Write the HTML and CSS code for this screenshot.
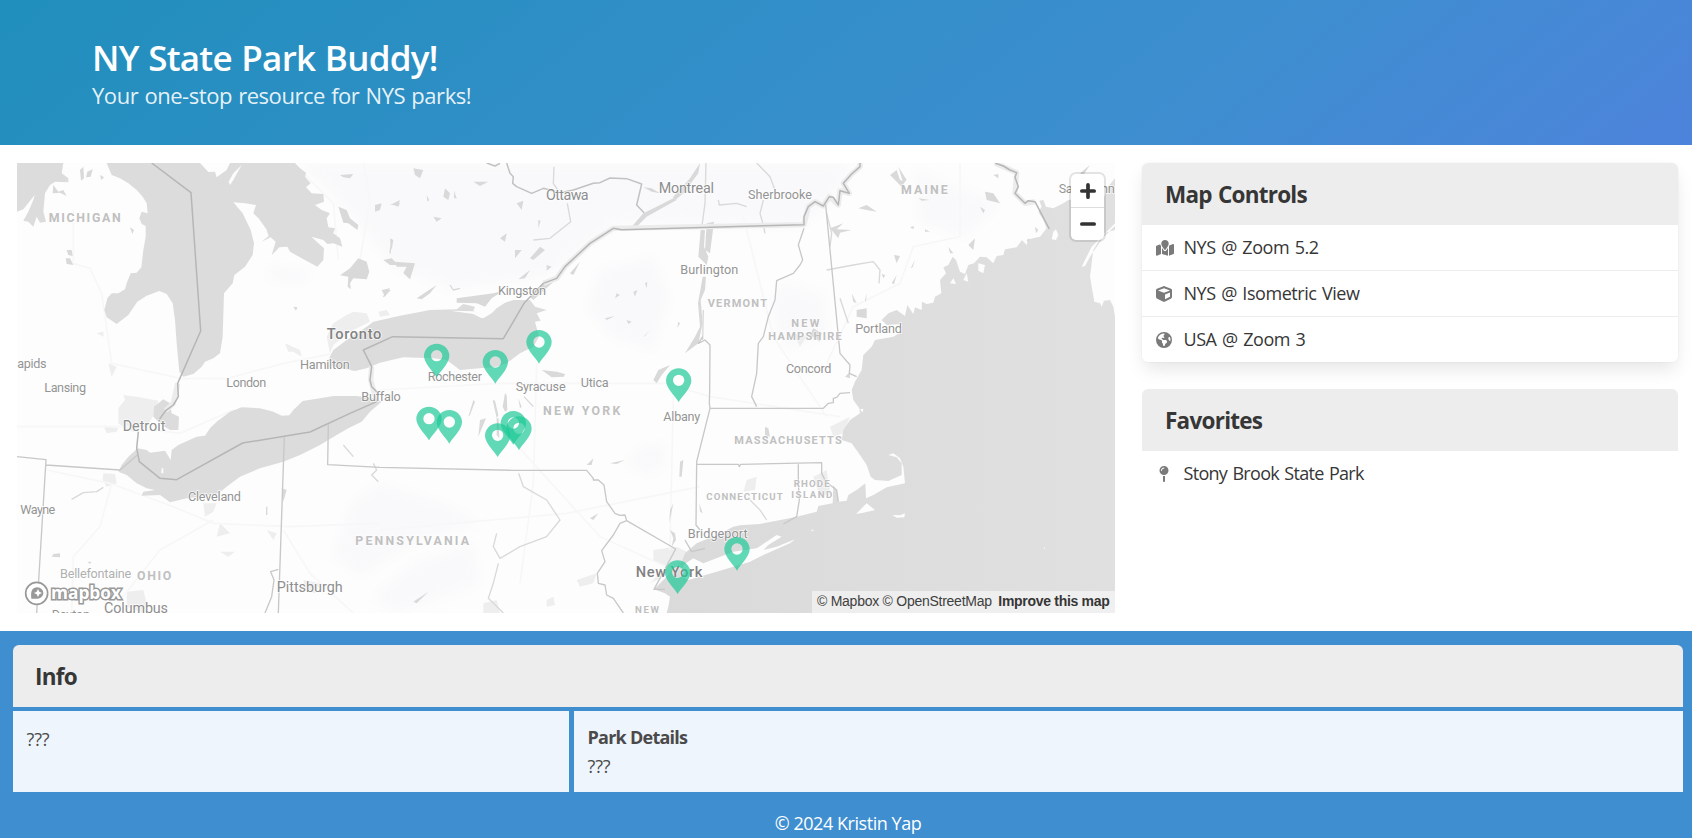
FILE: index.html
```html
<!DOCTYPE html>
<html lang="en">
<head>
<meta charset="utf-8">
<title>NY State Park Buddy</title>
<link rel="stylesheet" href="styles.css">
</head>
<body>
<header class="hero">
  <h1 class="title"><span>NY State Park Buddy!</span></h1>
  <p class="subtitle"><span>Your one-stop resource for NYS parks!</span></p>
</header>
<main class="columns">
  <section class="map">
    <svg class="map-canvas" viewBox="51 39 3294 1350" preserveAspectRatio="none">
      <defs>
        <linearGradient id="sea" x1="0" x2="1"><stop offset="0" stop-color="#dadada"/><stop offset="1" stop-color="#e0e0e0"/></linearGradient>
        <path id="pin" fill-rule="evenodd" d="M0 62C-10 44-38 20-38-2A38 37 0 0 1 38-2C38 20 10 44 0 62ZM0-20A17 17 0 1 0 0 14A17 17 0 1 0 0-20Z"/>
        <filter id="soft"><feGaussianBlur stdDeviation="16"/></filter>
      </defs>
      <rect x="51" y="39" width="3294" height="1350" fill="#fdfdfd"/>
      <g fill="#f9f9fb" filter="url(#soft)">
        <path d="M900 39H2560L2500 150 2400 230 1850 220 1640 380 1350 420 1180 350 1060 200Z"/>
        <path d="M1800 360L1960 320 2010 440 1960 600 1830 560 1760 470Z"/>
        <path d="M1140 1000L1340 1060 1440 1120 1240 1180 1080 1280 1000 1220 1050 1060ZM1920 890L1990 880 2000 940 1950 970 1870 950Z"/>
        <path d="M2340 400L2470 430 2480 560 2360 600 2310 480ZM800 350L940 360 900 400 810 390ZM1240 1240L1420 1180 1440 1300 1280 1360 1180 1389 1120 1340Z"/>
        <path d="M2740 60L3000 160 2900 260 2760 220Z"/>
      </g>
      <!-- towns -->
      <g fill="#eeeeef">
        <path d="M355 775L375 750 370 735 410 740 450 748 475 752 470 775 458 800 440 830 400 845 380 840 355 820ZM310 825L330 830 355 835 350 845 320 850ZM310 970L345 972 350 1000 320 1010 308 990Z"/>
        <path d="M1000 520L1040 495 1060 485 1100 490 1110 515 1050 545 1000 585 990 610 980 560ZM1135 485L1160 480 1170 495 1140 500ZM855 580L900 600 905 620 880 605 865 605Z"/>
        <path d="M610 1060L650 1060 640 1085 615 1100ZM660 1120L690 1150 650 1160ZM660 1205L705 1205 685 1220ZM380 1325L430 1320 440 1360 430 1389 380 1370ZM800 1140L830 1150 820 1170ZM910 1290L960 1300 945 1330 915 1320ZM290 550L310 545 310 560ZM325 640L350 650 335 680Z"/>
        <path d="M1960 1200L2030 1190 2070 1210 2040 1250 1990 1280 1950 1300 2000 1250 1960 1230ZM1730 1290L1790 1270 1780 1300 1740 1310ZM2240 990L2270 980 2265 1020 2230 1025ZM2490 830L2550 800 2530 850 2500 860ZM2440 980L2480 960 2490 1030 2460 1040ZM1640 1350L1660 1340 1665 1365 1640 1370ZM1450 1360L1490 1350 1500 1389 1450 1389ZM2380 550L2420 560 2400 590Z"/>
      </g>
      <!-- roads -->
      <g fill="none" stroke="#f7f7f8" stroke-width="5">
        <path d="M220 180V340L270 355 305 430 335 640 540 685 680 686 850 640 1000 610M51 830L200 830 380 830 540 850 700 780M140 960L330 1000 520 1070 640 1120 860 1130 1140 1120M335 1000L300 1130 220 1220 215 1389M640 1110L480 1200 330 1389M850 1140L930 1270 1060 1389M900 60L1000 160 1015 330M1090 39L1110 150 1080 330M1140 720L1500 700 2000 700 2130 740 2520 800M1610 640L1600 1000 1560 1300M2020 740L2010 1200M1500 830L1800 1160 2020 1260M1140 1140L1700 1090 2100 1010M2230 200L2320 560 2480 800M2480 640L2560 470 2700 400 2740 290 2880 260 2880 39"/>
      </g>
      <!-- great lakes -->
      <g fill="#dcdcdc">
        <path d="M51 39H190L185 70 205 85 205 97 165 95 150 105 135 130 130 185 138 215 120 218 110 200 100 230 85 215 70 212 85 185 100 150 104 135 70 178 51 185Z"/>
        <path d="M320 39L335 75 360 85 385 100 410 120 428 140 440 160 443 190 425 185 418 205 425 222 437 228 437 260 430 300 424 352 410 368 392 370 380 400 375 418 355 430 335 430 322 445 313 480 320 502 350 522 385 495 412 455 440 437 478 423 500 432 518 460 525 510 530 580 538 665 550 680 580 672 605 650 615 635 640 625 660 610 668 560 672 430 698 400 703 375 735 350 758 315 762 280 752 240 728 190 700 157 735 160 768 165 760 190 775 205 790 225 800 240 806 258 785 275 812 262 827 275 815 316 838 292 862 290 870 305 905 325 952 350 970 330 972 295 955 280 934 260 970 270 982 282 1000 280 1027 290 1020 265 1000 250 1005 235 985 232 980 205 990 190 965 180 945 165 972 155 970 132 935 130 918 112 932 100 915 80 918 68 900 55 885 39Z"/>
        <path d="M413 895L440 900 450 908 495 902 512 930 515 900 535 885 590 860 615 857 630 835 650 815 690 785 725 772 780 775 820 785 845 797 868 796 880 780 908 753 960 745 1000 738 1070 738 1120 745 1145 755 1110 785 1085 815 1045 835 1010 855 960 885 900 915 850 935 780 955 720 980 680 1010 655 1030 600 1040 560 1045 510 1057 480 1035 425 1037 430 1025 465 1020 440 1015 410 1000 380 975 355 965 365 945 385 920Z"/>
        <path d="M490 748L510 760 515 790 537 800 535 840 510 840 485 825 460 800 462 770Z"/>
        <path d="M985 630L1000 600 1040 570 1100 530 1120 515 1200 497 1240 490 1290 480 1370 478 1390 462 1425 470 1420 482 1450 505 1475 490 1490 475 1515 458 1540 450 1590 450 1605 470 1640 480 1610 490 1622 512 1605 515 1617 560 1600 590 1560 610 1520 640 1490 650 1380 660 1340 630 1300 625 1210 622 1140 638 1100 655 1065 663 1000 650Z"/>
      </g>
      <path fill="url(#sea)" d="M3345 85L3320 115 3313 140 3205 150 3190 160 3160 175 3138 170 3130 150 3118 152 3125 170 3115 185 3130 210 3140 235 3120 260 3085 268 3080 285 3066 270 3050 292 3015 298 3010 315 2990 318 2980 340 2960 322 2940 320 2922 340 2905 345 2895 372 2880 365 2868 330 2858 320 2845 345 2830 352 2838 370 2820 390 2824 430 2805 440 2800 458 2780 462 2766 455 2765 480 2745 472 2740 492 2722 465 2715 498 2690 480 2665 490 2645 510 2660 525 2705 522 2705 545 2680 560 2625 570 2615 590 2590 615 2585 660 2565 695 2555 720 2560 750 2578 775 2580 790 2550 810 2530 840 2525 870 2555 880 2580 915 2600 945 2612 980 2625 990 2665 993 2705 975 2705 940 2690 922 2665 915 2680 910 2700 925 2710 950 2715 1000 2660 1012 2620 1035 2598 1045 2596 1000 2570 1020 2545 1035 2540 1052 2515 1055 2510 1020 2500 1005 2498 1060 2455 1068 2450 1085 2390 1100 2330 1112 2280 1122 2220 1126 2200 1130 2150 1155 2090 1180 2055 1210 2045 1235 2015 1262 1990 1290 1962 1318 1995 1330 2010 1340 2005 1370 2000 1389H3345Z"/>
      <g fill="#fdfdfd">
        <path d="M3345 240L3310 250 3280 300 3270 380 3283 455 3300 460 3305 470 3312 452 3330 450 3340 470 3345 500ZM3245 350L3275 290 3320 245 3345 220V228L3310 262 3270 320 3255 348ZM3155 268L3160 245 3168 238 3175 255 3168 270Z"/>
        <path d="M2040 1275L2050 1245 2080 1225 2110 1240 2200 1205 2270 1195 2330 1155 2345 1160 2305 1185 2290 1200 2330 1190 2385 1168 2370 1180 2290 1215 2250 1235 2160 1262 2065 1290Z"/>
        <path d="M2568 1092L2600 1060 2625 1080 2590 1088ZM2677 1095L2700 1096 2715 1090 2713 1102 2690 1103ZM2435 1138L2442 1142 2434 1143ZM2580 778L2590 776 2588 788ZM485 955L490 955 490 970 484 970ZM600 39H690L680 60 650 82 645 65 625 66ZM725 45L700 90 690 105 686 95 700 70ZM3132 1193H3135V1196H3132Z"/>
        <path d="M1350 482L1420 484 1450 500 1445 505 1420 492ZM2850 400L2860 385 2868 402ZM2890 390L2900 370 2905 395ZM2935 340L2955 345 2950 370 2935 362ZM750 190L775 205 800 240 780 250 755 215Z"/>
      </g>
      <!-- inland lakes and rivers -->
      <g fill="#d9d9d9">
        <path d="M240 60L250 50 252 85 243 92ZM262 65L278 58 272 80 258 82ZM300 75L312 82 304 90ZM200 300L215 300 218 318 205 315ZM197 325L210 325 220 345 200 342ZM390 232L402 240 397 252ZM160 105L175 125 190 120 200 138 180 128 158 130ZM1020 376L1050 355 1075 325 1100 335 1108 365 1100 388 1060 385 1050 400 1053 418 1043 410 1045 380ZM1015 170L1040 180 1050 205 1075 225 1072 240 1045 220 1030 218ZM1020 75L1060 72 1050 85 1030 82ZM1125 165L1145 160 1140 180 1125 185ZM1170 165L1200 150 1195 165ZM1170 265L1180 270 1175 300ZM1150 330L1175 325 1195 345 1170 345ZM1145 420L1170 415 1155 440ZM880 470L892 472 888 482Z"/>
        <path d="M1240 55L1270 60 1260 85 1245 75ZM1335 115L1350 130 1345 150 1330 140ZM1362 122L1370 145 1362 145ZM1280 135L1288 150 1282 155ZM1180 165L1200 158 1195 170ZM1420 95L1465 95 1440 108ZM1300 200L1325 205 1310 215ZM1275 145L1285 140ZM1615 210L1622 212 1615 235ZM1550 160L1570 152 1565 180ZM1500 265L1520 250 1515 275ZM1545 300L1565 300 1545 325ZM1590 325L1620 290 1635 300 1600 330ZM1555 388L1590 360 1575 385ZM1250 445L1310 405 1290 430 1265 448ZM1185 335L1245 340 1230 388 1210 370 1220 350 1190 350ZM1640 345L1655 350 1640 362ZM1710 370L1740 335 1720 375Z"/>
        <path d="M1370 445L1480 430 1510 422 1475 445 1455 470 1430 460 1370 458ZM1590 440L1630 400 1680 380 1650 405 1600 450ZM1895 230L1930 190 1970 170 2020 145 2030 150 1980 178 1940 200 1910 230ZM2020 140L2070 85 2100 39 2095 70 2050 130 2020 155ZM1930 112L1955 115 1980 130 1955 125ZM2102 240L2115 240 2112 290 2125 320 2120 345 2105 330 2095 320ZM2120 220L2142 215 2130 310 2115 300ZM2108 380L2118 380 2115 420 2102 450 2108 520 2095 580 2055 610 2085 560 2100 530 2094 460ZM1850 430L1860 435 1845 445ZM1900 425L1912 420 1905 440ZM1935 400L1942 395 1940 415ZM1815 505L1845 498 1820 510ZM1880 510L1895 515 1885 522ZM1930 560L1950 540 1935 558ZM2035 515L2040 520 2032 535ZM1625 660L1670 665 1695 672 1692 680 1655 682ZM1960 690L1975 660 2010 645 1985 675 1970 700ZM1478 750L1485 752 1495 795 1490 805ZM1515 730L1520 735 1522 780 1515 785 1508 770ZM1420 750L1425 755 1410 795 1405 800ZM1440 810L1458 805 1435 860ZM1555 745L1565 770 1560 775ZM1490 805L1496 805 1498 865 1490 855Z"/>
        <path d="M2670 75L2690 60 2700 90 2715 95 2705 110ZM2695 50L2720 90 2710 100ZM2575 175L2600 165 2630 185 2600 180ZM2490 235L2530 220 2510 238 2555 240 2520 248 2515 265ZM2755 145L2790 150 2765 152ZM2955 125L2980 130 3000 160 2960 150ZM2980 75L2995 72 2995 85ZM2940 170L2955 180 2950 190ZM2730 232L2742 228 2740 238ZM2775 238L2790 245 2775 245ZM2905 285L2925 265 2920 300ZM2845 290L2860 310 2850 310ZM2682 315L2700 318 2690 340ZM2732 355L2745 330 2738 352ZM2645 372L2656 375 2650 385ZM2675 400L2690 375 2682 402ZM2555 430L2570 460 2560 455ZM2595 450L2600 430 2598 455ZM2570 480L2600 475 2600 505 2570 500ZM2440 535L2465 550 2460 575 2430 555ZM2535 680L2550 665 2550 685ZM2040 935L2050 930 2045 980 2038 980ZM1760 945L1780 925 1775 945ZM1830 940L1875 930 1850 942ZM1770 1105L1795 1090 1780 1110ZM2010 1080L2020 1060 2008 1120ZM2010 1140L2025 1150 2028 1170 2015 1190 2020 1165ZM2098 1060L2108 1090 2100 1085ZM2295 830L2305 835 2310 860 2295 855ZM1240 1355L1285 1325 1270 1340 1250 1360ZM160 1212L180 1210 180 1222 155 1220ZM262 1235L275 1235 270 1242ZM845 1015L860 1020 850 1055ZM3105 230L3115 240 3108 250ZM3080 270L3087 265 3085 280ZM3240 70L3270 45 3250 75Z"/>
      </g>
      <g fill="none" stroke="#d9d9d9" stroke-width="4" stroke-linejoin="round">
        <path d="M2118 39L2115 160 2105 235M1702 160L1712 215 1650 265 1600 270M1662 50L1660 100 1680 130M2155 150L2158 165 2210 160 2240 170M2290 150L2280 190 2290 225 2295 250M2270 39L2310 80 2325 120M2110 480L2108 570M1556 970L1570 1010 1640 1050 1680 1110 1640 1160 1560 1190 1500 1225 1480 1190 1490 1150M1495 1240L1480 1300 1465 1345 1510 1389M2480 360L2560 345 2620 335 2640 360 2637 400M2520 445L2545 520M2250 1050L2280 1080 2300 1110M2480 190L2495 250 2490 290M1572 740L1600 770M1120 940L1130 960 1115 975 1135 995M215 1048L250 1028 290 1025 310 1012M800 1070V1095M1030 885L1060 920M1170 420L1150 440M1350 405L1360 420 1380 415M1175 270L1170 310"/>
      </g>
      <!-- glow along the national border -->
      <g fill="none" stroke="#ececed" stroke-width="16" stroke-linejoin="round">
        <path d="M533 700L520 760 497 782M1130 755L1112 690 1115 650M1630 400L1670 385 1695 350 1770 280 1840 235 2412 224 2425 170 2445 155 2470 168 2488 140 2515 165 2520 122 2548 130 2530 100 2555 72 2580 50V39M2985 39L3050 68 3045 130 3075 160 3105 155"/>
      </g>
      <g fill="none" stroke="#b6b6b6" stroke-width="4.5" stroke-linejoin="round">
        <path d="M455 39L573 128 602 543 533 700 535 740 520 765 497 782 478 808M415 845L410 895 418 935 480 985 530 989 728 879 930 846 1050 790 1130 755 1135 730 1115 710 1110 690 1115 650 1090 600 1178 560 1510 566 1572 460 1630 400 1670 385 1695 350 1770 280 1840 235 1865 239 2412 224 2412 200 2425 170 2445 155 2470 168 2488 140 2500 142 2515 165 2520 122 2548 130 2530 100 2555 72 2580 50V39M2985 39L3010 48 3030 60 3050 68 3045 82 3055 110 3045 130 3075 160 3085 152 3105 155 3148 237"/>
        <path stroke="#c2c2c2" d="M1460 39L1485 48 1500 40M1520 39L1530 70 1540 80 1538 100 1550 110 1595 130 1630 115 1680 128 1720 120 1780 100 1800 98 1830 84 1880 86 1925 102 1910 165 1932 188"/>
      </g>
      <g fill="none" stroke="#c8c8c8" stroke-width="4" stroke-linejoin="round">
        <path d="M51 920L138 929 110 1389M138 945L360 960 412 915M853 862L835 1389M835 1258L812 1265 822 1290 815 1340 795 1389M985 822L983 944 1140 952 1540 961H1760L1780 985 1780 990 1795 990 1812 1005 1820 1055 1845 1090 1860 1096 1875 1095 1880 1112 2027 1197 1962 1318H1995M1880 1112L1860 1120 1840 1155 1805 1202 1815 1235 1792 1270 1795 1300 1815 1305 1820 1335 1840 1345 1870 1389M2108 560L2095 580 2115 570 2130 585 2129 720 2128 760 2130 775 2090 935 2088 1125 2100 1140M2130 775H2470L2485 760 2500 758 2500 745 2510 742 2520 730 2550 728M2092 943H2215L2218 950 2222 943 2465 938V970L2475 990 2490 1005 2510 1020 2515 1055M2395 943V1000L2398 1050 2390 1100 2350 1122M2412 235L2395 285 2408 330 2400 345 2380 370 2330 392 2325 450 2305 500 2290 560 2275 580 2270 670 2255 740 2270 770M2477 165L2520 610 2550 645 2548 670 2570 680M2055 1170L2075 1205 2115 1195"/>
      </g>
      <g class="city">
        <text x="1638" y="151" textLength="128" class="big">Ottawa</text><text x="1976" y="130" textLength="166" class="big">Montreal</text>
        <text x="2244" y="146" textLength="192">Sherbrooke</text><text x="2041" y="373" textLength="174">Burlington</text>
        <text x="1494" y="436" textLength="144">Kingston</text><text x="980" y="567" textLength="164" class="metro">Toronto</text>
        <text x="900" y="657" textLength="149">Hamilton</text><text x="679" y="710" textLength="120">London</text>
        <text x="52" y="654" textLength="88">apids</text><text x="133" y="725" textLength="125">Lansing</text>
        <text x="1283" y="693" textLength="163">Rochester</text><text x="1547" y="722" textLength="150">Syracuse</text>
        <text x="1742" y="710" textLength="84">Utica</text><text x="1084" y="752" textLength="118">Buffalo</text>
        <text x="1990" y="814" textLength="111">Albany</text><text x="2566" y="549" textLength="140">Portland</text>
        <text x="2358" y="668" textLength="136">Concord</text><text x="368" y="842" textLength="128" class="big">Detroit</text>
        <text x="564" y="1054" textLength="159">Cleveland</text><text x="61" y="1092" textLength="105">Wayne</text>
        <text x="180" y="1283" textLength="214" class="pale">Bellefontaine</text><text x="830" y="1325" textLength="198" class="big">Pittsburgh</text>
        <text x="312" y="1390" textLength="192" class="big">Columbus</text><text x="155" y="1407" textLength="115">Dayton</text>
        <text x="2063" y="1164" textLength="180">Bridgeport</text><text x="1907" y="1281" textLength="200" class="metro">New York</text>
        <text x="3176" y="128" textLength="168">Saint John</text>
      </g>
      <g class="state">
        <text x="146" y="216" textLength="216">MICHIGAN</text><text x="2703" y="131" textLength="140">MAINE</text>
        <text x="2123" y="472" textLength="178" class="small">VERMONT</text><text x="2374" y="531" textLength="84" class="small">NEW</text>
        <text x="2305" y="570" textLength="220" class="small">HAMPSHIRE</text><text x="1629" y="794" textLength="232">NEW YORK</text>
        <text x="2203" y="881" textLength="322" class="small">MASSACHUSETTS</text><text x="2119" y="1050" textLength="229" class="mini">CONNECTICUT</text>
        <text x="2381" y="1010" textLength="108" class="mini">RHODE</text><text x="2374" y="1044" textLength="123" class="mini">ISLAND</text>
        <text x="1066" y="1184" textLength="341">PENNSYLVANIA</text><text x="411" y="1289" textLength="103">OHIO</text>
        <text x="1905" y="1388" textLength="72" class="mini">NEW</text>
      </g>
      <g class="pins" fill="#1ec997"><use href="#pin" x="1310" y="620"/><use href="#pin" x="1486" y="639"/><use href="#pin" x="1617" y="579"/><use href="#pin" x="2036" y="694"/><use href="#pin" x="1287" y="809"/><use href="#pin" x="1348" y="819"/><use href="#pin" x="1540" y="822"/><use href="#pin" x="1557" y="838"/><use href="#pin" x="1493" y="859"/><use href="#pin" x="2211" y="1200"/><use href="#pin" x="2033" y="1270"/></g>
      <g>
        <circle cx="110" cy="1330" r="33" fill="#fff" stroke="#999" stroke-width="5"/>
        <path fill="#999" d="M94 1346C91 1322 97 1312 112 1312A18 17 0 0 1 112 1346Z"/>
        <path fill="#fff" d="M114 1317L118 1325 126 1329 118 1333 114 1341 110 1333 102 1329 110 1325Z"/>
        <text class="logo" x="153" y="1346" textLength="210" lengthAdjust="spacingAndGlyphs">mapbox</text>
      </g>
    </svg>
    <div class="zoom">
      <button class="zoom-btn"><svg viewBox="0 0 13 13"><path d="M6.5 1.5v10M1.5 6.5h10"/></svg></button>
      <button class="zoom-btn"><svg viewBox="0 0 13 13"><path d="M1.5 6.5h10"/></svg></button>
    </div>
    <div class="attribution"><span>© Mapbox</span> <span>© OpenStreetMap</span> <b>Improve this map</b></div>
  </section>
  <aside class="side">
    <nav class="panel shadowed">
      <h2 class="panel-heading"><span>Map Controls</span></h2>
      <a class="panel-block"><svg class="icon wide" viewBox="0 0 576 512"><path d="M408 120c0 54.6-73.1 151.9-105.2 192c-7.7 9.6-22 9.6-29.6 0C241.1 271.9 168 174.6 168 120C168 53.7 221.7 0 288 0s120 53.7 120 120zm8 80.4c3.5-6.9 6.7-13.8 9.6-20.6c.5-1.2 1-2.5 1.5-3.7l116-46.4C558.9 123.4 576 135 576 152V422.8c0 9.8-6 18.6-15.1 22.3L416 503V200.4zM137.6 138.3c2.4 14.1 7.2 28.3 12.8 41.5c2.9 6.8 6.1 13.7 9.6 20.6V451.8L32.9 502.7C17.1 509 0 497.4 0 480.4V209.6c0-9.8 6-18.6 15.1-22.3l122.6-49zM327.8 332c13.9-17.4 35.7-45.7 56.2-77V504.3L192 449.4V255c20.5 31.3 42.3 59.6 56.2 77c20.5 25.6 59.1 25.6 79.6 0z"/></svg><span>NYS @ Zoom 5.2</span></a>
      <a class="panel-block"><svg class="icon" viewBox="0 0 512 512"><path d="M239.1 6.3l-208 78c-18.7 7-31.1 25-31.1 45v225.1c0 18.2 10.3 34.8 26.5 42.9l208 104c13.5 6.8 29.4 6.8 42.9 0l208-104c16.3-8.1 26.5-24.8 26.5-42.9V129.3c0-20-12.4-37.9-31.1-44.9l-208-78C262 2.2 250 2.2 239.1 6.3zM256 68.4l192 72v1.1l-192 78-192-78v-1.1l192-72zm32 356V275.5l160-65v133.9l-160 80z"/></svg><span>NYS @ Isometric View</span></a>
      <a class="panel-block"><svg class="icon" viewBox="0 0 512 512"><path d="M57.7 193l9.4 16.4c8.3 14.5 21.9 25.2 38 29.8L163 255.7c17.2 4.9 29 20.6 29 38.5v39.9c0 11 6.2 21 16 25.9s16 14.9 16 25.9v39c0 15.6 14.9 26.9 29.9 22.6c16.1-4.6 28.6-17.5 32.7-33.8l2.8-11.2c4.2-16.9 15.2-31.4 30.3-40l8.1-4.6c15-8.5 24.2-24.5 24.2-41.7v-8.3c0-12.7-5.1-24.9-14.1-33.9l-3.9-3.9c-9-9-21.2-14.1-33.9-14.1H257c-11.1 0-22.1-2.9-31.8-8.4l-34.5-19.7c-4.3-2.5-7.6-6.5-9.2-11.2c-3.2-9.6 1.1-20 10.2-24.5l5.9-3c6.6-3.3 14.3-3.9 21.3-1.5l23.2 7.7c8.2 2.7 17.2-.4 21.9-7.5c4.7-7 4.2-16.3-1.2-22.8l-13.6-16.3c-10-12-9.9-29.5 .3-41.3l15.7-18.3c8.8-10.3 10.2-25 3.5-36.7l-2.4-4.2c-3.5-.2-6.9-.3-10.4-.3C163.1 48 84.4 108.9 57.7 193zM464 256c0-36.8-9.6-71.4-26.4-101.5L412 164.8c-15.7 6.3-23.8 23.8-18.5 39.8l16.9 50.7c3.5 10.4 12 18.3 22.6 20.9l29.1 7.3c1.2-9 1.8-18.2 1.8-27.5zM0 256a256 256 0 1 1 512 0A256 256 0 1 1 0 256z"/></svg><span>USA @ Zoom 3</span></a>
    </nav>
    <nav class="panel">
      <h2 class="panel-heading"><span>Favorites</span></h2>
      <a class="panel-block"><svg class="icon" viewBox="0 0 320 512"><path d="M16 144a144 144 0 1 1 288 0A144 144 0 1 1 16 144zM160 80c8.8 0 16-7.2 16-16s-7.2-16-16-16c-53 0-96 43-96 96c0 8.8 7.2 16 16 16s16-7.2 16-16c0-35.3 28.7-64 64-64zM128 480V317.1c10.4 1.9 21.1 2.9 32 2.9s21.6-1 32-2.9V480c0 17.7-14.3 32-32 32s-32-14.3-32-32z"/></svg><span class="favorite">Stony Brook State Park</span></a>
    </nav>
  </aside>
</main>
<footer class="info">
  <h2 class="panel-heading info-heading"><span>Info</span></h2>
  <div class="info-row">
    <section class="box summary"><p>???</p></section>
    <section class="box details"><h3><span>Park Details</span></h3><p>???</p></section>
  </div>
  <p class="copyright"><span>© 2024 Kristin Yap</span></p>
</footer>
</body>
</html>
```
FILE: styles.css
```css
* { box-sizing: border-box; margin: 0; padding: 0; }
html, body { height: 838px; overflow: hidden; }
body { font: 18px/27px "Open Sans", "Noto Sans", sans-serif; letter-spacing: -0.45px; color: #4a4a4a; background: #fff; }
.hero { height: 145px; padding: 35px 92px 0; color: #fff; background: linear-gradient(141deg, #208fbc 0%, #3e8ed0 71%, #4d83db 100%); }
.title { font-size: 35px; line-height: 45px; font-weight: 600; letter-spacing: -0.75px; word-spacing: 1.2px; }
.subtitle { font-size: 22px; line-height: 30px; letter-spacing: -0.45px; word-spacing: 0.9px; color: rgba(255, 255, 255, 0.9); }
.columns { display: flex; gap: 27px; height: 486px; padding: 18px 14px 18px 17px; }
.map { position: relative; width: 1098px; height: 450px; overflow: hidden; }
.map-canvas { display: block; width: 1098px; height: 450px; }
.city text { font: 400 38px Roboto, sans-serif; letter-spacing: 0; word-spacing: 0; fill: #949494; stroke: #fff; stroke-width: 5px; stroke-opacity: 0.75; paint-order: stroke; }
.city .big { font-size: 43px; fill: #8e8e8e; }
.city .metro { font-size: 44px; font-weight: 500; fill: #828282; }
.city .pale { fill: #b0b0b0; }
.state text { font: 700 37px Roboto, sans-serif; letter-spacing: 0; fill: #c0c0c0; stroke: #fff; stroke-width: 4px; stroke-opacity: 0.6; paint-order: stroke; }
.state .small { font-size: 33px; }
.state .mini { font-size: 29px; }
.pins use { opacity: 0.7; }
.logo { font: 700 52px "Open Sans", sans-serif; letter-spacing: 0; fill: #fff; stroke: #999; stroke-width: 9px; paint-order: stroke; }
.zoom { position: absolute; top: 11px; right: 11px; width: 33px; height: 66px; border-radius: 5px; background: #fff; box-shadow: 0 0 0 2px rgba(0, 0, 0, 0.1); }
.zoom-btn { display: flex; align-items: center; justify-content: center; width: 33px; height: 33px; border: 0; background: none; }
.zoom-btn + .zoom-btn { border-top: 1px solid #ddd; }
.zoom-btn svg { width: 16px; height: 16px; fill: none; stroke: #333; stroke-width: 3px; stroke-linecap: round; }
.attribution { position: absolute; right: 0; bottom: 0; width: 303px; height: 22px; padding-left: 5px; background: rgba(255, 255, 255, 0.5); color: #404040; font: 14px/21px "Liberation Sans", Arial, sans-serif; letter-spacing: -0.26px; white-space: nowrap; }
.attribution b { margin-left: 3px; letter-spacing: -0.3px; color: #363636; }
.side { width: 536px; }
.panel { border-radius: 6px; }
.panel + .panel { margin-top: 27px; }
.shadowed { box-shadow: 0 9px 18px -2px rgba(10, 10, 10, 0.1), 0 0 0 1px rgba(10, 10, 10, 0.02); }
.panel-heading { height: 62px; padding: 18px 23px 16px; border-radius: 6px 6px 0 0; background: #ededed; color: #363636; font-size: 22.5px; line-height: 28px; font-weight: 700; letter-spacing: -0.75px; word-spacing: 1px; }
.info-heading { padding-left: 22px; }
.panel-block { display: flex; align-items: center; gap: 11.5px; height: 45px; padding-left: 14px; color: #363636; word-spacing: 1.3px; }
.panel-block + .panel-block { height: 46px; border-top: 1px solid #ededed; }
.favorite { letter-spacing: -0.7px; }
.icon { width: 16px; height: 16px; fill: #7a7a7a; }
.icon.wide { width: 18px; margin-right: -2px; }
.info { height: 207px; padding: 14px 9px 0 13px; background: #3e8ed0; }
.info-row { display: flex; gap: 5px; margin-top: 4px; }
.box { height: 81px; padding: 13px 13.5px; background: #eff5fd; }
.summary { width: 556px; padding-top: 15px; }
.box p { letter-spacing: -0.1px; }
.details { flex: 1; }
.details h3 { font-size: 18px; line-height: 27px; letter-spacing: -0.75px; }
.details p { line-height: 30px; }
.copyright { padding-top: 18px; text-align: center; color: #fff; }
```
